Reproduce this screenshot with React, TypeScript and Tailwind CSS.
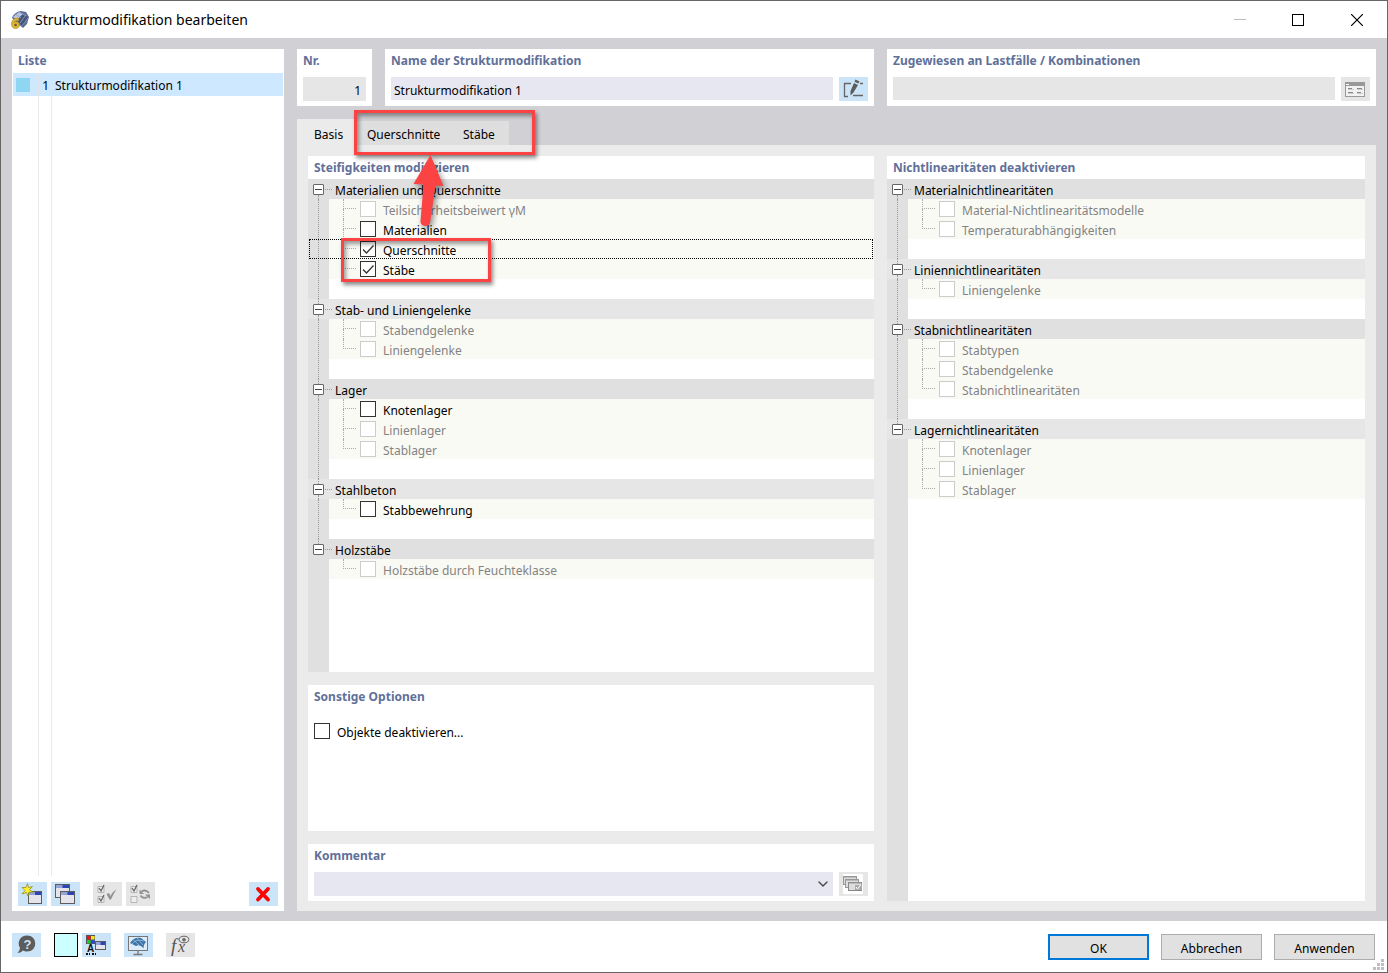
import React, { useState } from 'react';
import { ChevronDown } from 'lucide-react';
import clsx from 'clsx';

type Option = { label: string; enabled?: boolean; checked?: boolean; focused?: boolean };
type Group = { title: string; options: Option[] };

const stiffness: Group[] = [
  {
    title: 'Materialien und Querschnitte',
    options: [
      { label: 'Teilsicherheitsbeiwert γM' },
      { label: 'Materialien', enabled: true },
      { label: 'Querschnitte', enabled: true, checked: true, focused: true },
      { label: 'Stäbe', enabled: true, checked: true },
    ],
  },
  { title: 'Stab- und Liniengelenke', options: [{ label: 'Stabendgelenke' }, { label: 'Liniengelenke' }] },
  {
    title: 'Lager',
    options: [{ label: 'Knotenlager', enabled: true }, { label: 'Linienlager' }, { label: 'Stablager' }],
  },
  { title: 'Stahlbeton', options: [{ label: 'Stabbewehrung', enabled: true }] },
  { title: 'Holzstäbe', options: [{ label: 'Holzstäbe durch Feuchteklasse' }] },
];

const nonlinearities: Group[] = [
  {
    title: 'Materialnichtlinearitäten',
    options: [{ label: 'Material-Nichtlinearitätsmodelle' }, { label: 'Temperaturabhängigkeiten' }],
  },
  { title: 'Liniennichtlinearitäten', options: [{ label: 'Liniengelenke' }] },
  {
    title: 'Stabnichtlinearitäten',
    options: [{ label: 'Stabtypen' }, { label: 'Stabendgelenke' }, { label: 'Stabnichtlinearitäten' }],
  },
  {
    title: 'Lagernichtlinearitäten',
    options: [{ label: 'Knotenlager' }, { label: 'Linienlager' }, { label: 'Stablager' }],
  },
];

const Heading = ({ children, id }: { children: React.ReactNode; id?: string }) => (
  <h2 id={id} className="h-[23px] shrink-0 truncate px-1.5 font-bold leading-[23px] text-[#5f7099]">
    {children}
  </h2>
);

/* Titled box with one row of controls, used for the header fields and the comment */
const FieldCard = ({ title, id, children }: { title: string; id: string; children: React.ReactNode }) => (
  <section className="min-w-0 bg-white pb-[5px]">
    <Heading id={id}>{title}</Heading>
    <div className="mt-[5px] flex items-start gap-1.5 px-1.5">{children}</div>
  </section>
);

const ToolButton = ({ label, muted, children }: { label: string; muted?: boolean; children: React.ReactNode }) => (
  <button
    type="button"
    aria-label={label}
    disabled={muted}
    className={clsx('h-6 w-[29px] shrink-0', muted ? 'bg-[#e6e6e6]' : 'bg-[#cce4f7]')}
  >
    <svg viewBox="0 0 29 24" className="h-6 w-[29px]" fill="none">
      {children}
    </svg>
  </button>
);

const MiniWindow = ({ x, y, w = 14, h = 13 }: { x: number; y: number; w?: number; h?: number }) => (
  <g>
    <rect x={x + 0.5} y={y + 0.5} width={w - 1} height={h - 1} fill="#e4e4ea" stroke="#5c5c5c" />
    <rect x={x + 1} y={y + 1} width={w - 2} height="3" fill="#93a5d8" />
    <rect x={x + w / 2} y={y + 1} width={w / 2 - 1} height="3" fill="#2c45b5" />
  </g>
);

const CheckBox = ({ option }: { option: Option }) => {
  const [on, setOn] = useState(!!option.checked);
  return (
    <label className={clsx('flex h-5 items-center gap-[7px]', !option.enabled && 'text-[#838383]')}>
      <span className="grid size-4 shrink-0">
        <input
          type="checkbox"
          checked={on}
          disabled={!option.enabled}
          onChange={() => setOn(!on)}
          className="peer col-start-1 row-start-1 size-4 appearance-none border border-[#333] bg-white disabled:border-[#ccc]"
        />
        <svg viewBox="0 0 16 16" className="pointer-events-none col-start-1 row-start-1 hidden size-4 peer-checked:block" fill="none">
          <path d="M3 8.5L6.5 12L13.5 4.5" stroke="#333" strokeWidth="1.3" />
        </svg>
      </span>
      <span className="whitespace-nowrap pt-1 leading-4">{option.label}</span>
    </label>
  );
};

const OptionTree = ({ groups, children }: { groups: Group[]; children?: React.ReactNode }) => (
  <div className="relative flex flex-1 flex-col">
    {groups.map((group, g) => {
      const last = g === groups.length - 1;
      return (
        <div key={group.title} className={clsx('flex flex-col', last && 'flex-1')}>
          <div className={clsx('flex h-5 items-center', g % 2 ? 'bg-[#e6e6e6]' : 'bg-[#e0e0e0]')}>
            <div className="flex w-[21px] flex-col items-center self-stretch">
              <span className={clsx('h-[5px] border-l border-dotted', g ? 'border-[#999]' : 'border-transparent')} />
              <button
                type="button"
                aria-label={group.title + ' zuklappen'}
                className="flex size-[11px] shrink-0 items-center justify-center rounded-[1px] border border-[#666] bg-white"
              >
                <span className="h-px w-[7px] bg-[#444]" />
              </button>
              <span className={clsx('flex-1 border-l border-dotted', last ? 'border-transparent' : 'border-[#999]')} />
            </div>
            <span className="-ml-1 w-[7px] border-t border-dotted border-[#999]" />
            <span className="ml-[3px] truncate pt-1 leading-4">{group.title}</span>
          </div>
          <div className="flex flex-1">
            <div className="flex w-[21px] shrink-0 justify-center bg-[#e0e0e0]">
              {!last && <span className="border-l border-dotted border-[#999]" />}
            </div>
            <ul className={clsx('min-w-0 flex-1', !last && 'pb-5')}>
              {group.options.map((option, i) => (
                <li key={option.label} className="relative flex h-5 bg-[#fafaf5] pl-3.5">
                  {option.focused && (
                    <span className="pointer-events-none absolute inset-y-0 right-px -left-5 border border-dotted border-black" />
                  )}
                  <span className="flex w-[17px] shrink-0 flex-col">
                    <span className="h-2.5 w-[13px] border-b border-l border-dotted border-[#aaa]" />
                    {i < group.options.length - 1 && <span className="flex-1 border-l border-dotted border-[#aaa]" />}
                  </span>
                  <CheckBox option={option} />
                </li>
              ))}
            </ul>
          </div>
        </div>
      );
    })}
    {children}
  </div>
);

const highlight = 'pointer-events-none absolute border-3 border-[#fb4343] shadow-[2px_3px_4px_rgba(0,0,0,0.45),inset_2px_3px_4px_rgba(0,0,0,0.4)]';

const TitleBar = () => (
  <header className="flex h-[37px] items-center bg-white pl-2">
    <svg viewBox="0 0 20 20" className="size-5" fill="none">
      <path d="M3 8C4 4 9 1 12 1L17 2L20 7L18 14L14 18L9 14Z" fill="#5d6f96" />
      <path d="M4 7L10 2L14 4L8 10Z" fill="#b9c6dc" />
      <path d="M8 10L14 4L19 7L14 17Z" fill="#445378" />
      <path d="M6 4L12 8M10 2L17 6M11 13L17 5M13 16L19 8" stroke="#94a5c7" strokeWidth=".8" />
      <path d="M10 8.500C5 7.500 2.500 10.500 2.500 14C2.500 17 4.500 18.500 6.500 18.500C9 18.500 10.500 17 10.500 15C10.500 13 9 11.700 7 11.700C6.200 11.700 5.500 12 5 12.500C5.500 11 7 10.500 9.500 11Z" fill="#e0b62f" stroke="#a08227" strokeWidth=".6" />
      <circle cx="6.600" cy="15" r="1.300" fill="#5d5a50" />
    </svg>
    <h1 className="ml-1.5 flex-1 truncate text-[14px]">Strukturmodifikation bearbeiten</h1>
    <div className="flex pr-px">
      <button type="button" aria-label="Minimieren" disabled className="flex h-9 w-[59px] items-center justify-center text-[#bbb]">
        <svg viewBox="0 0 12 12" className="size-3"><path d="M0 5.5h12" stroke="currentColor" /></svg>
      </button>
      <button type="button" aria-label="Maximieren" className="flex h-9 w-[58px] items-center justify-center">
        <svg viewBox="0 0 12 12" className="size-3" fill="none"><rect x=".5" y=".5" width="11" height="11" stroke="black" /></svg>
      </button>
      <button type="button" aria-label="Schließen" className="flex h-9 w-[59px] items-center justify-center">
        <svg viewBox="0 0 12 12" className="size-3"><path d="M0 0L12 12M12 0L0 12" stroke="black" strokeWidth="1.2" /></svg>
      </button>
    </div>
  </header>
);

const ListPanel = () => (
  <aside className="flex w-[272px] shrink-0 flex-col bg-white">
    <Heading>Liste</Heading>
    <ul className="mx-px mt-px flex flex-1 flex-col">
      <li className="flex h-[23px] items-stretch bg-[#cde8ff]">
        <span className="flex w-[26px] items-center border-r border-[#e4e4e4] pl-[3px]">
          <span className="size-3.5 bg-[#8fd6f2]" />
        </span>
        <span className="w-[13px] border-r border-[#e4e4e4] pr-0.5 text-right leading-[26px]">1</span>
        <span className="truncate pl-[3px] leading-[26px]">Strukturmodifikation 1</span>
      </li>
      <li aria-hidden="true" className="flex flex-1">
        <span className="w-[26px] border-r border-[#ebebeb]" />
        <span className="w-[13px] border-r border-[#ebebeb]" />
      </li>
    </ul>
    <div className="mt-1.5 flex gap-1 px-1.5 pb-[5px]">
      <ToolButton label="Neu">
        <MiniWindow x={10} y={9} />
        <path d="M9.500 1.500L10.500 5.500L14.500 4.500L11.500 7.500L15 10L11 10L10 14L8.500 10.500L4 12L7 8.500L4 5.500L8 5.500Z" fill="#fbf12c" stroke="#8d8416" strokeWidth=".7" />
      </ToolButton>
      <ToolButton label="Kopieren">
        <MiniWindow x={4} y={2} w={15} h={14} />
        <MiniWindow x={9} y={9} w={15} h={13} />
      </ToolButton>
      <span className="w-[5px]" />
      <ToolButton label="Alle auswählen" muted>
        <path d="M5 4.500h6v6h-6zM5 14.500h6v6h-6z" fill="#eee" stroke="#b5b5b5" />
        <path d="M6 6L8 9L11 3M6 16L8 19L11 13" stroke="#666" strokeWidth="1.300" />
        <path d="M13.500 12L16 11L17.500 14C19 11 20.500 9 23.500 7.500C21 11 19.500 14 18 17.500H16.500Z" fill="#929292" />
      </ToolButton>
      <ToolButton label="Auswahl umkehren" muted>
        <path d="M5 4.500h6v6h-6zM5 14.500h6v6h-6z" fill="#eee" stroke="#b5b5b5" />
        <path d="M6 6L8 9L11 3" stroke="#666" strokeWidth="1.300" />
        <path d="M15.500 9.500C18 8 21 8.500 23 11" stroke="#929292" strokeWidth="1.800" />
        <path d="M13.500 7.500V12H18Z" fill="#929292" />
        <path d="M14.500 13.500C16 16 19 16.500 21.500 15" stroke="#929292" strokeWidth="1.800" />
        <path d="M24 17V12.500H19Z" fill="#929292" />
      </ToolButton>
      <span className="flex-1" />
      <ToolButton label="Löschen">
        <path d="M9 7L19 17.500M19 7L9 17.500" stroke="#fa0505" strokeWidth="3.800" strokeLinecap="round" />
      </ToolButton>
    </div>
  </aside>
);

const HeaderFields = () => (
  <div className="grid grid-cols-[75px_1fr_1fr] gap-[13px]">
    <FieldCard title="Nr." id="nr">
      <input aria-labelledby="nr" readOnly value="1" className="h-6 w-full min-w-0 bg-[#e6e6e6] pt-0.5 pr-[5px] text-right" />
    </FieldCard>
    <FieldCard title="Name der Strukturmodifikation" id="name">
      <input aria-labelledby="name" defaultValue="Strukturmodifikation 1" className="h-[23px] min-w-0 flex-1 bg-[#e7e7f2] px-[3px] pt-[3px]" />
      <ToolButton label="Name bearbeiten">
        <path d="M12 6.500H5.500V19.500H9M14 18.500H24M21 6.500H24" stroke="#666" strokeWidth="1.300" />
        <path d="M15 6L19 8L14.500 15.500L11.500 18.500L11.500 14Z" fill="#5c5c5c" />
        <path d="M16.500 2.500L20.500 4.500L19.500 6.500L15.500 4.700Z" fill="#5c5c5c" />
      </ToolButton>
    </FieldCard>
    <FieldCard title="Zugewiesen an Lastfälle / Kombinationen" id="assigned">
      <input aria-labelledby="assigned" disabled className="h-[23px] min-w-0 flex-1 bg-[#e6e6e6]" />
      <ToolButton label="Zuweisung bearbeiten" muted>
        <rect x="4.500" y="5.500" width="19" height="14" fill="#f2f2f2" stroke="#999" />
        <rect x="4" y="6" width="20" height="3" fill="#999" />
        <path d="M5 7.500h3" stroke="#fff" />
        <path d="M7 11.500h4M16 11.500h5M7 15.500h5M16 15.500h4" stroke="#888" />
        <path d="M7 12.500h6M16 12.500h6M7 16.500h6M16 16.500h6" stroke="#ccc" />
      </ToolButton>
    </FieldCard>
  </div>
);

const Tabs = () => (
  <div role="tablist" className="relative mt-[13px] flex h-[26px] items-end">
    <button role="tab" aria-selected="true" type="button" className="h-[26px] w-[60px] bg-[#ebebeb] pt-1.5 pl-[17px] text-left">Basis</button>
    <button role="tab" aria-selected="false" type="button" className="h-6 w-24 bg-[#dedede] pt-1 pl-2.5 text-left">Querschnitte</button>
    <button role="tab" aria-selected="false" type="button" className="h-6 w-14 bg-[#dedede] pt-1 pl-2.5 text-left">Stäbe</button>
    <span className={clsx(highlight, '-top-[9px] left-[57px] z-10 h-[45px] w-[181px]')} />
  </div>
);

const BasisPage = () => (
  <div className="flex flex-1 gap-[13px] bg-[#ebebeb] px-[11px] pt-[11px] pb-2.5">
    <div className="flex min-w-0 flex-[1_1_88px] flex-col gap-[13px]">
      <section className="flex flex-1 flex-col bg-white">
        <Heading>Steifigkeiten modifizieren</Heading>
        <OptionTree groups={stiffness}>
          <span className={clsx(highlight, 'top-[59px] left-[33px] h-11 w-[150px]')} />
          <svg viewBox="0 0 40 84" className="pointer-events-none absolute -top-6 left-[102px] z-20 h-[84px] w-10 drop-shadow-[2px_3px_3px_rgba(0,0,0,0.45)]">
            <path d="M20.500 0L33.500 31L25.500 30.500L20 68A5 5 0 0 1 10.500 67L13.500 29.500L3.500 29Z" fill="#fb4343" />
          </svg>
        </OptionTree>
      </section>
      <section className="h-[146px] bg-white">
        <Heading>Sonstige Optionen</Heading>
        <div className="px-1.5 pt-[13px]">
          <CheckBox option={{ label: 'Objekte deaktivieren...', enabled: true }} />
        </div>
      </section>
      <FieldCard title="Kommentar" id="comment">
        <div className="relative min-w-0 flex-1">
          <select aria-labelledby="comment" className="h-6 w-full appearance-none bg-[#e7e7f2]" />
          <ChevronDown className="pointer-events-none absolute top-1 right-0.5 size-4 text-[#444]" strokeWidth={2} />
        </div>
        <ToolButton label="Kommentare" muted>
          <rect x="4" y="2" width="20" height="20" fill="#fff" />
          <rect x="4.500" y="4.500" width="13" height="8" fill="#ddd" stroke="#999" />
          <rect x="6.500" y="7.500" width="13" height="8" fill="#ddd" stroke="#999" />
          <rect x="9.500" y="10.500" width="13" height="8" fill="#ddd" stroke="#888" />
          <path d="M4 5h14M7 8h13M10 11h13" stroke="#999" />
          <rect x="16" y="13" width="7" height="5" fill="#aaa" />
          <path d="M17 15L18.500 17L22 12.500" stroke="#fff" />
        </ToolButton>
      </FieldCard>
    </div>
    <section className="flex min-w-0 flex-[1_1_0px] flex-col bg-white">
      <Heading>Nichtlinearitäten deaktivieren</Heading>
      <OptionTree groups={nonlinearities} />
    </section>
  </div>
);

const Footer = () => (
  <footer className="relative flex h-[51px] items-start bg-white pt-3 pr-3 pl-[11px]">
    <div className="flex flex-1">
      <ToolButton label="Hilfe">
        <path d="M15 2.500C20 2.500 23.200 6 23.200 10.500C23.200 15 20 18.500 15 18.500C13.500 18.500 12 18 11 17.500C9.500 19 8 19.800 5.500 20C7 18.500 7.500 17 8 15C4.500 9 8.500 2.500 15 2.500Z" fill="#5c5c5c" />
        <text x="11.500" y="15.500" fontSize="13" fontWeight="700" fontFamily="Liberation Sans, sans-serif" fill="#cce4f7">?</text>
      </ToolButton>
      <button type="button" aria-label="Farbe" className="ml-[13px] size-6 border border-black bg-[#ccffff]" />
      <span className="w-1" />
      <ToolButton label="Anzeigeeigenschaften">
        <rect x="4" y="2" width="9" height="9" fill="#555" />
        <rect x="5" y="3" width="3.500" height="3.500" fill="#f01414" />
        <rect x="9" y="3" width="3.500" height="3.500" fill="#f5e616" />
        <rect x="5" y="7" width="3.500" height="3.500" fill="#22cc22" />
        <rect x="9" y="7" width="3.500" height="3.500" fill="#2a48e8" />
        <text x="5" y="18.500" fontSize="10" fontWeight="700" fontFamily="Liberation Sans, sans-serif" fill="#111">A</text>
        <path d="M4 21h4M10 21h4" stroke="#111" strokeWidth="2" strokeDasharray="2 1" />
        <MiniWindow x={13} y={8} w={11} h={9} />
      </ToolButton>
      <span className="w-[13px]" />
      <ToolButton label="Grafik">
        <rect x="4.500" y="3.500" width="19" height="14" fill="#dcecf8" stroke="#777" />
        <path d="M14 18v3M9.500 21.500h9" stroke="#777" strokeWidth="1.300" />
        <path d="M6 10C9 5 13 4 17 5L22 9C20 11 19.500 13 19.500 15.500C17 12 14 11.500 12 13Z" fill="#3d74a8" />
        <path d="M8 11C11 7 15 6.500 20 8M9.500 7L15 12M13 5L19 12" stroke="#a9cbe4" strokeWidth=".7" />
      </ToolButton>
      <span className="w-[13px]" />
      <ToolButton label="Formel" muted>
        <text x="5" y="18.500" fontSize="19" fontStyle="italic" fontFamily="Liberation Serif, serif" fill="#555">f</text>
        <text x="12" y="19" fontSize="16" fontStyle="italic" fontFamily="Liberation Serif, serif" fill="#555">x</text>
        <ellipse cx="18" cy="6.500" rx="4.800" ry="3.300" fill="#e6e6e6" stroke="#666" />
        <circle cx="18" cy="6.800" r="1.800" fill="#666" />
      </ToolButton>
    </div>
    <div className="mt-px flex gap-3">
      <button type="button" className="h-[26px] w-[101px] border-2 border-[#0078d7] bg-[#e1e1e1] pt-1">OK</button>
      <button type="button" className="h-[26px] w-[101px] border border-[#adadad] bg-[#e1e1e1] pt-1">Abbrechen</button>
      <button type="button" className="h-[26px] w-[101px] border border-[#adadad] bg-[#e1e1e1] pt-1">Anwenden</button>
    </div>
    <svg viewBox="0 0 11 11" className="pointer-events-none absolute right-[3px] bottom-0.5 size-[11px]" fill="#bfbfbf">
      <path d="M8 0h3v3h-3zM4 4h3v3h-3zM8 4h3v3h-3zM0 8h3v3h-3zM4 8h3v3h-3zM8 8h3v3h-3z" />
    </svg>
  </footer>
);

export default function App() {
  return (
    <div className="flex min-h-screen flex-col border border-[#666] bg-white font-['Noto_Sans','Open_Sans',sans-serif] text-[12px] text-black">
      <TitleBar />
      <main className="flex flex-1 gap-[13px] bg-[#d1d0d5] px-[11px] pt-[11px] pb-2.5">
        <ListPanel />
        <div className="flex min-w-0 flex-1 flex-col">
          <HeaderFields />
          <Tabs />
          <BasisPage />
        </div>
      </main>
      <Footer />
    </div>
  );
}
